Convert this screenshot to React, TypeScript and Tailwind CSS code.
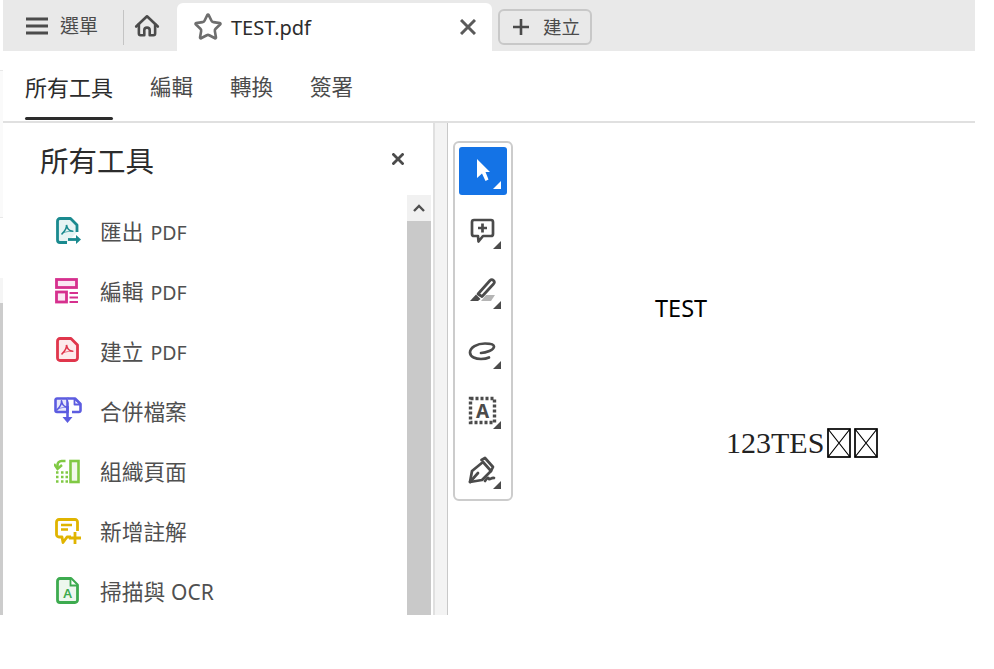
import React from 'react';
import { Star } from 'lucide-react';

const FONT = '"Noto Sans", "Noto Sans CJK TC", sans-serif';

// acrobat swoosh used by the document icons, drawn at (x, y) in a 28 box
const Swoosh = ({ x, y, color }: { x: number; y: number; color: string }) => (
  <g transform={`translate(${x} ${y}) scale(0.9)`} fill="none" stroke={color} strokeLinecap="round">
    <path d="M0 11C3 8 5.500 4.500 5 1C5.500 4.500 8 8 12 8" strokeWidth="1.800" />
    <path d="M2 9.500C5 8.500 8 8 11 8" strokeWidth="1.200" opacity="0.6" />
  </g>
);

const ExportIcon = () => (
  <svg width="28" height="28" viewBox="0 0 28 28" fill="none">
    <path d="M23 15V8L16.500 1.500H6A2.500 2.500 0 0 0 3.500 4V23A2.500 2.500 0 0 0 6 25.500H13" fill="#e6f4f4" stroke="#1a8a8f" strokeWidth="2.800" strokeLinejoin="round" />
    <Swoosh x={8} y={7} color="#1a8a8f" />
    <path d="M14 22.500H25" stroke="#1a8a8f" strokeWidth="2.800" />
    <path d="M22 18L27 22.500L22 27Z" fill="#1a8a8f" />
  </svg>
);

const EditIcon = () => (
  <svg width="28" height="28" viewBox="0 0 28 28" fill="none" stroke="#d6308e" strokeWidth="2.800">
    <rect x="2.500" y="2.500" width="20" height="8" fill="#fbe8f3" />
    <rect x="2.500" y="15" width="10" height="10" fill="#fbe8f3" />
    <path d="M15.500 16H24M15.500 20.500H24M15.500 25H24" strokeWidth="2.200" />
  </svg>
);

const CreateIcon = () => (
  <svg width="28" height="28" viewBox="0 0 28 28" fill="none">
    <path d="M17 1.500H6A2.500 2.500 0 0 0 3.500 4V21A2.500 2.500 0 0 0 6 23.500H21A2.500 2.500 0 0 0 23.500 21V8Z" fill="#fdeaec" stroke="#e0364c" strokeWidth="2.800" strokeLinejoin="round" />
    <Swoosh x={8} y={7} color="#e0364c" />
  </svg>
);

const MergeIcon = () => (
  <svg width="28" height="28" viewBox="0 0 28 28" fill="none" stroke="#5c5ce0" strokeWidth="2.600" strokeLinejoin="round">
    <path d="M13.500 15H3A1.500 1.500 0 0 1 1.500 13.500V3A1.500 1.500 0 0 1 3 1.500H13.500Z" fill="#e8e8fa" />
    <path d="M13.500 1.500H21L26.500 7V13.500A1.500 1.500 0 0 1 25 15H18" fill="#fff" />
    <path d="M20.500 2V7.500H26" strokeWidth="1.800" />
    <Swoosh x={3} y={3} color="#5c5ce0" />
    <path d="M13.500 9V21" />
    <path d="M8.500 20H18.500L13.500 26Z" fill="#5c5ce0" stroke="none" />
  </svg>
);

const OrganizeIcon = () => (
  <svg width="28" height="28" viewBox="0 0 28 28" fill="none" stroke="#80c944">
    <rect x="16.500" y="4" width="8" height="21" fill="#f1f8ea" strokeWidth="2.600" />
    <path d="M11.500 4H7.500A4 4 0 0 0 3.500 8V10" strokeWidth="2.600" />
    <path d="M0 7L3.500 12L8 8" strokeWidth="2.400" />
    <path d="M2 15.500H4.500M7 15.500H9.500M11.500 15.500H14M2 20H4.500M7 20H9.500M11.500 20H14M2 24.500H4.500M7 24.500H9.500M11.500 24.500H14" strokeWidth="2.400" />
  </svg>
);

const CommentIcon = () => (
  <svg width="28" height="28" viewBox="0 0 28 28" fill="none" stroke="#e0b400" strokeWidth="2.800">
    <path d="M17 20H13L9 25.500L8 20H5A2.500 2.500 0 0 1 2.500 17.500V5A2.500 2.500 0 0 1 5 2.500H21A2.500 2.500 0 0 1 23.500 5V14" strokeLinejoin="round" />
    <path d="M7 8H18M7 12.500H14" strokeWidth="2.400" />
    <path d="M21 15V27M15 21H27" />
  </svg>
);

const ScanIcon = () => (
  <svg width="28" height="28" viewBox="0 0 28 28" fill="none">
    <path d="M17 1.500H6A2.500 2.500 0 0 0 3.500 4V23A2.500 2.500 0 0 0 6 25.500H21A2.500 2.500 0 0 0 23.500 23V8Z" fill="#edf7ee" stroke="#3dab4f" strokeWidth="2.800" strokeLinejoin="round" />
    <path d="M16.500 2V8.500H23" fill="#fff" stroke="#3dab4f" strokeWidth="1.800" />
    <text x="13.500" y="21" textAnchor="middle" fontSize="13" fontWeight="600" fill="#3dab4f" fontFamily="Noto Sans">A</text>
  </svg>
);

const TOOLS = [
  { cjk: '匯出', latin: 'PDF', latinClass: 'ml-[7px] text-[19.500px]', icon: <ExportIcon /> },
  { cjk: '編輯', latin: 'PDF', latinClass: 'ml-[7px] text-[19.500px]', icon: <EditIcon /> },
  { cjk: '建立', latin: 'PDF', latinClass: 'ml-[7px] text-[19.500px]', icon: <CreateIcon /> },
  { cjk: '合併檔案', latin: '', latinClass: '', icon: <MergeIcon /> },
  { cjk: '組織頁面', latin: '', latinClass: '', icon: <OrganizeIcon /> },
  { cjk: '新增註解', latin: '', latinClass: '', icon: <CommentIcon /> },
  { cjk: '掃描與', latin: 'OCR', latinClass: 'ml-[6px] text-[21px]', icon: <ScanIcon /> },
];

const TOOLBAR: React.ReactNode[] = [
  <path key="c" d="M18 12L31 25H26.500L29.500 32.500L26.500 34L23 26.500L18 31Z" fill="#fff" />,
  <g key="n" fill="none" stroke="#4b4b4b" strokeWidth="2.700" strokeLinejoin="round">
    <path d="M15 13H32A2 2 0 0 1 34 15V27A2 2 0 0 1 32 29H24L19.500 34.500L19 29H15A2 2 0 0 1 13 27V15A2 2 0 0 1 15 13Z" />
    <path d="M19 21H28M23.500 16.500V25.500" />
  </g>,
  <g key="h">
    <path d="M22 34H32L36 28H27Z" fill="#b5b5b5" />
    <path d="M19 27L31 13.500C32 12.500 33.500 12.500 34.500 13.500C35.500 14.500 35.500 16 34.500 17L23 29.500Z" fill="none" stroke="#4b4b4b" strokeWidth="2.700" strokeLinejoin="round" />
    <path d="M11 34L17 27.500L21.500 32L19 34Z" fill="#4b4b4b" />
  </g>,
  <path key="l" d="M22 26C27 26 35 23 35 19.500C35 17 30 16.500 26 16.500C18 16.500 11 20.500 11 25.500C11 30 17 32 22 32C25 32 28 31.500 30 30.500" fill="none" stroke="#4b4b4b" strokeWidth="2.700" strokeLinecap="round" />,
  <g key="a">
    <rect x="11.500" y="11.500" width="24" height="24" fill="none" stroke="#4b4b4b" strokeWidth="3.400" strokeDasharray="3 2" />
    <text x="23.500" y="30.500" textAnchor="middle" fontSize="19" fontWeight="700" fill="#4b4b4b" fontFamily="Noto Sans">A</text>
  </g>,
  <g key="p" fill="none" stroke="#4b4b4b" strokeWidth="2.700" strokeLinejoin="round" strokeLinecap="round">
    <path d="M11 35L13 24L24 15L32 24L23 33Z" />
    <path d="M22.500 13L26 11L34 20L32 24" />
    <path d="M11 35L19 26" />
    <path d="M26 34C28 31 29 30 30 32C31 33 33 30 35 31" />
  </g>,
];

const Tofu = () => (
  <svg width="24" height="30" viewBox="0 0 24 30" fill="none" stroke="#000" strokeWidth="1.700" className="shrink-0">
    <rect x="1" y="1" width="22" height="28" />
    <path d="M1 1L23 29M23 1L1 29" strokeWidth="1.200" />
  </svg>
);

export default function App() {
  return (
    <div className="flex h-[669px] w-[994px] overflow-hidden bg-white" style={{ fontFamily: FONT }}>
      {/* leftovers of the window behind, down the left edge */}
      <div className="flex h-[615px] w-[3px] shrink-0 flex-col">
        <div className="h-[70px] bg-white" />
        <div className="h-[147px] border-t border-[#e8e8e8] bg-[#fafafa]" />
        <div className="h-[61px] border-t border-[#e8e8e8] bg-white" />
        <div className="h-[25px] bg-[#f5f5f5]" />
        <div className="flex-1 bg-[#cccccc]" />
      </div>

      <div className="flex h-[615px] w-[972px] shrink-0 flex-col">
        {/* tab strip */}
        <div className="flex h-[51px] shrink-0 items-end bg-[#e9e9e9]">
          <div className="flex h-full w-[120px] items-center pl-[23px]">
            <svg width="22" height="18" viewBox="0 0 22 18" stroke="#4b4b4b" strokeWidth="3">
              <path d="M0 2H22M0 9H22M0 16H22" />
            </svg>
            <span className="ml-3 pt-[2px] text-[19px] text-[#4b4b4b]">選單</span>
          </div>
          <div className="mb-[6px] h-[35px] w-px bg-[#c4c4c4]" />
          <div className="flex h-full w-[53px] items-center pl-[10px]">
            <svg width="26" height="26" viewBox="0 0 24 24" fill="none" stroke="#4b4b4b" strokeWidth="2.400" strokeLinejoin="round" strokeLinecap="round">
              <path d="M2 12.500L12 3L22 12.500" />
              <path d="M4.500 10.500V19A1.500 1.500 0 0 0 6 20.500H9.500V16A2.500 2.500 0 0 1 14.500 16V20.500H18A1.500 1.500 0 0 0 19.500 19V10.500" />
            </svg>
          </div>
          <div className="flex h-[48px] w-[315px] items-center rounded-t-md bg-white pl-[16px] pr-[16px]">
            <Star size={30} strokeWidth={2.100} className="shrink-0 text-[#6e6e6e]" />
            <span className="ml-[8px] pt-[2px] text-[20px] leading-none text-[#2c2c2c]">TEST.pdf</span>
            <svg width="16" height="16" viewBox="0 0 16 16" stroke="#5a5a5a" strokeWidth="3" className="ml-auto">
              <path d="M1 1L15 15M15 1L1 15" />
            </svg>
          </div>
          <div className="mb-[6px] ml-[6px] flex h-[36px] w-[94px] items-center rounded-md border-2 border-[#c8c8c8] pl-[13px]">
            <svg width="16" height="16" viewBox="0 0 16 16" stroke="#4b4b4b" strokeWidth="2.600">
              <path d="M8 0V16M0 8H16" />
            </svg>
            <span className="ml-[14px] text-[18.500px] text-[#4b4b4b]">建立</span>
          </div>
        </div>

        {/* top tabs */}
        <div className="flex h-[72px] shrink-0 gap-[37px] border-b-2 border-[#e0e0e0] pl-[22px]">
          <div className="relative flex h-[70px] items-center pt-[2px] text-[22px] text-[#2c2c2c]">
            所有工具
            <div className="absolute bottom-px left-0 h-[3px] w-full rounded-full bg-[#2c2c2c]" />
          </div>
          <div className="flex h-[70px] items-center pt-[2px] text-[21.500px] text-[#4b4b4b]">編輯</div>
          <div className="flex h-[70px] items-center pt-[2px] text-[21.500px] text-[#4b4b4b]">轉換</div>
          <div className="flex h-[70px] items-center pt-[2px] text-[21.500px] text-[#4b4b4b]">簽署</div>
        </div>

        <div className="flex min-h-0 flex-1">
          {/* all tools panel */}
          <div className="flex w-[428px] shrink-0 flex-col">
            <div className="flex h-[72px] shrink-0 items-center justify-between pl-[37px] pr-[27px]">
              <span className="pt-[4px] text-[28.500px] leading-none text-[#2c2c2c]">所有工具</span>
              <svg width="12" height="12" viewBox="0 0 12 12" stroke="#4b4b4b" strokeWidth="2.800">
                <path d="M0.500 0.500L11.500 11.500M11.500 0.500L0.500 11.500" />
              </svg>
            </div>
            <div className="flex min-h-0 flex-1">
              <div className="flex w-[404px] flex-col overflow-hidden pl-[51px] pt-[6px]">
                {TOOLS.map((t) => (
                  <div key={t.cjk} className="flex h-[60px] shrink-0 items-center gap-[18px]">
                    {t.icon}
                    <span className="pt-[2px] text-[21.700px] text-[#505050]">
                      {t.cjk}
                      {t.latin && <span className={t.latinClass}>{t.latin}</span>}
                    </span>
                  </div>
                ))}
              </div>
              <div className="flex w-[24px] flex-col">
                <div className="flex h-[26px] items-center justify-center bg-[#f1f1f1]">
                  <svg width="12" height="8" viewBox="0 0 12 8" fill="none" stroke="#505050" strokeWidth="2.400">
                    <path d="M1 7L6 2L11 7" />
                  </svg>
                </div>
                <div className="flex-1 bg-[#c9c9c9]" />
              </div>
            </div>
          </div>

          {/* splitter */}
          <div className="w-[2px] bg-white" />
          <div className="w-[2px] bg-[#e0e0e0]" />
          <div className="w-[13px] border-r border-[#c8c8c8] bg-[#f3f3f3]" />

          {/* document view */}
          <div className="relative flex-1 bg-white pl-[5px] pt-[18px]">
            <div className="flex h-[360px] w-[60px] flex-col gap-[12px] rounded-md border-2 border-[#cccccc] bg-white p-1">
              {TOOLBAR.map((icon, i) => (
                <div key={i} className={`h-[48px] w-[48px] shrink-0 rounded-[3px] ${i === 0 ? 'bg-[#1473e6]' : ''}`}>
                  <svg width="48" height="48" viewBox="0 0 48 48">
                    {icon}
                    <path d="M42 34V42H34Z" fill={i === 0 ? '#fff' : '#4b4b4b'} />
                  </svg>
                </div>
              ))}
            </div>
            <span className="absolute left-[207px] top-[170px] text-[23.500px] leading-[30px] text-black">TEST</span>
            <div className="absolute left-[278px] top-[303px] flex items-center gap-[3px] text-[30px] leading-[34px] text-[#222]" style={{ fontFamily: '"Liberation Serif", serif' }}>
              123TES
              <Tofu />
              <Tofu />
            </div>
          </div>
        </div>
      </div>
    </div>
  );
}
